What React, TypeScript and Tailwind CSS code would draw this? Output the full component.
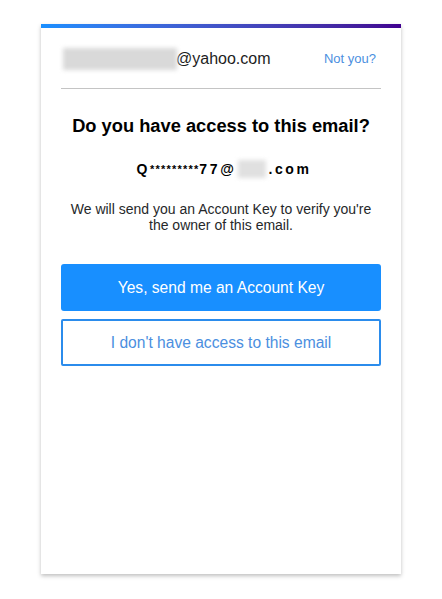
import React from "react";

export default function App() {
  return (
    <div className="w-[442px] h-[599px] bg-white pt-[24px]" style={{ fontFamily: '"Liberation Sans", Arial, sans-serif' }}>
      <div className="ml-[41px] w-[360px] h-[550px] bg-white shadow-[0_2px_4px_rgba(0,0,0,0.25)] flex flex-col">
        <div className="h-[4px] bg-gradient-to-r from-[#188fff] to-[#400090]" />
        <div className="px-[20px]">
          <div className="flex items-center justify-between h-[61px] border-b border-[#c4c4c4] pt-[2px]">
            <div className="flex items-center pl-[2px]">
              <div className="w-[114px] h-[22px] bg-[#d9d9d9] blur-[2px]" />
              <span className="text-[16px] text-[#1d1d1d] -ml-[1px]">@yahoo.com</span>
            </div>
            <span className="text-[13px] text-[#4b8fe0] pr-[5px]">Not you?</span>
          </div>
          <h1 className="mt-[26px] text-center text-[18.3px] font-bold text-black leading-[22px]">Do you have access to this email?</h1>
          <div className="mt-[23px] flex items-center justify-center text-[14px] font-bold tracking-[2.6px] text-black pl-[6px] leading-[18px]">
            <span>Q<span className="text-[11px] align-top tracking-[1.2px]">*********</span>77@</span>
            <span className="inline-block w-[28px] h-[18px] bg-[#e0e0e0] blur-[2px] mx-[2px]" />
            <span>.com</span>
          </div>
          <p className="mt-[23px] text-center text-[14px] text-[#26282a] leading-[16px] px-[4px]">
            We will send you an Account Key to verify you're the owner of this email.
          </p>
          <button className="mt-[31px] w-full h-[47px] rounded-[3px] bg-[#188fff] text-white text-[15.6px]">
            Yes, send me an Account Key
          </button>
          <button className="mt-[8px] w-full h-[47px] rounded-[2px] border-2 border-[#2b8cec] bg-white text-[#4b8fe0] text-[15.6px]">
            I don't have access to this email
          </button>
        </div>
      </div>
    </div>
  );
}
